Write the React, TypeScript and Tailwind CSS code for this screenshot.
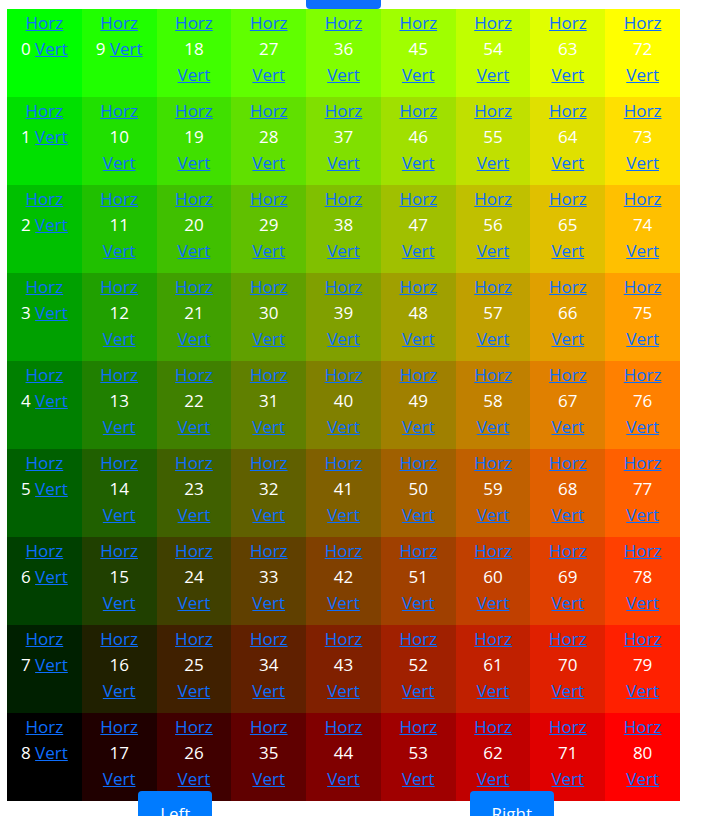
const SIZE = 9;

const cells = Array.from({ length: SIZE * SIZE }, (_, i) => {
  const row = Math.floor(i / SIZE);
  const col = i % SIZE;
  return { row, col, id: col * SIZE + row };
});

const channel = (step: number) => Math.min(255, step * 32);

function Cell({ row, col, id }: { row: number; col: number; id: number }) {
  return (
    <div
      className="h-[88px] px-3 pt-px text-center text-white"
      style={{ backgroundColor: `rgb(${channel(col)}, ${channel(SIZE - 1 - row)}, 0)` }}
    >
      <a href={`#horz-${id}`} className="text-[#0d6efd] underline">Horz</a>{" "}
      {id}{" "}
      <a href={`#vert-${id}`} className="text-[#0d6efd] underline">Vert</a>
    </div>
  );
}

export default function App() {
  return (
    <div className="h-screen overflow-hidden bg-white pr-[21px] pl-[7px] font-['Open_Sans','Noto_Sans',sans-serif] text-[17px] leading-[26px]">
      <div className="flex h-[9px] items-end justify-center">
        <button type="button" aria-label="Up" className="h-10 w-[75px] shrink-0 rounded bg-[#0d6efd]" />
      </div>
      <main className="grid grid-cols-9">
        {cells.map((cell) => (
          <Cell key={cell.id} {...cell} />
        ))}
      </main>
      <div className="relative -mt-[10px] grid grid-cols-2 justify-items-center">
        <button type="button" className="rounded bg-[#007bff] px-[22px] py-[10px] text-white">Left</button>
        <button type="button" className="rounded bg-[#007bff] px-[22px] py-[10px] text-white">Right</button>
      </div>
    </div>
  );
}
